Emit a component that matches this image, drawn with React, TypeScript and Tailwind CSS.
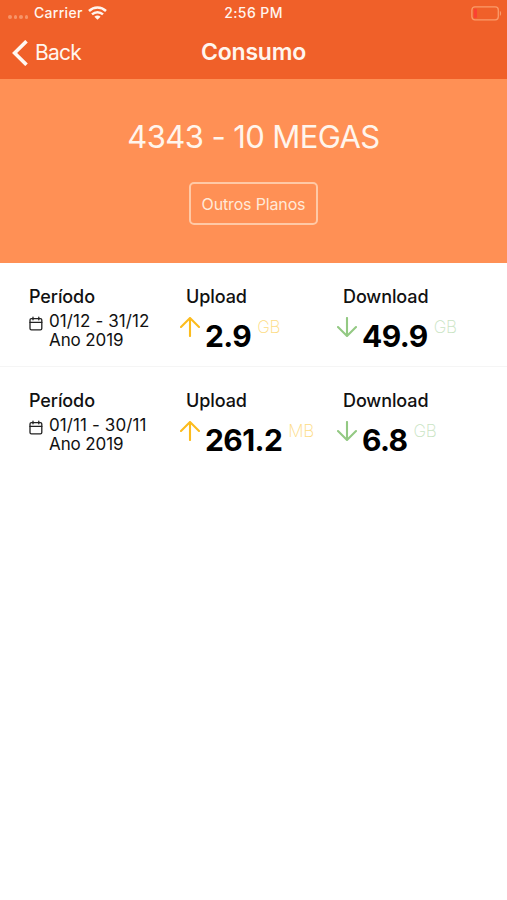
import React from 'react';

interface Usage {
  value: string;
  unit: string;
}

interface Period {
  range: string;
  year: string;
  upload: Usage;
  download: Usage;
}

const periods: Period[] = [
  { range: '01/12 - 31/12', year: 'Ano 2019', upload: { value: '2.9', unit: 'GB' }, download: { value: '49.9', unit: 'GB' } },
  { range: '01/11 - 30/11', year: 'Ano 2019', upload: { value: '261.2', unit: 'MB' }, download: { value: '6.8', unit: 'GB' } },
];

const WifiIcon = () => (
  <svg className="w-[19px] h-[14px]" viewBox="0 0 19 14" fill="none" stroke="#fff5ee" strokeWidth="2.5">
    <path d="M1 5C5.8 0.4 13.2 0.4 18 5" />
    <path d="M4 8.4C7.2 5.5 11.8 5.5 15 8.4" />
    <path d="M9.5 13.8L6.4 10.7C8.2 9.2 10.8 9.2 12.6 10.7Z" fill="#fff5ee" stroke="none" />
  </svg>
);

const BatteryIcon = () => (
  <svg className="w-[31px] h-[15px]" viewBox="0 0 31 15" fill="none">
    <rect x="0.9" y="0.9" width="26.4" height="12.9" rx="3" stroke="#fa9b6b" strokeWidth="1.3" />
    <rect x="2.8" y="2.8" width="3.2" height="9.2" rx="1" fill="#fb4133" />
    <path d="M28.9 5V9.8C30.5 9.2 30.5 5.6 28.9 5Z" fill="#fa9b6b" />
  </svg>
);

const CalendarIcon = () => (
  <svg className="w-[14px] h-[15px] shrink-0" viewBox="0 0 14 15" fill="none" stroke="#222" strokeWidth="1.3" strokeLinecap="round">
    <rect x="1" y="2.6" width="11.8" height="11.2" rx="1.4" />
    <path d="M1 6.4H12.8" />
    <path d="M4 1.2V3.8M9.8 1.2V3.8" />
  </svg>
);

const ArrowIcon = ({ down }: { down?: boolean }) => (
  <svg
    className={`w-5 h-5 shrink-0 ${down ? 'rotate-180' : ''}`}
    viewBox="0 0 20 20"
    fill="none"
    stroke={down ? '#93c983' : '#fcbc1e'}
    strokeWidth="2.1"
    strokeLinecap="round"
    strokeLinejoin="round"
  >
    <path d="M10 19V1M1 10L10 1L19 10" />
  </svg>
);

const UsageColumn = ({ title, usage, down }: { title: string; usage: Usage; down?: boolean }) => (
  <div className="w-[157px] shrink-0 whitespace-nowrap">
    <h3 className="pl-[6px] text-[18px] leading-[22px] font-medium tracking-[-0.1px]">{title}</h3>
    <div className="flex items-start mt-[9px]">
      <ArrowIcon down={down} />
      <span className="ml-[5px] mt-px text-[30px] leading-9 font-bold tracking-[-0.6px] text-black">{usage.value}</span>
      <span className={`ml-[6px] text-[17px] leading-5 font-extralight tracking-[-0.3px] ${down ? 'text-[#c9e4c3]' : 'text-[#fddc85]'}`}>
        {usage.unit}
      </span>
    </div>
  </div>
);

const App: React.FC = () => {
  return (
    <div className="w-[507px] h-[900px] bg-white text-[#111] font-['Inter',sans-serif] overflow-hidden">
      <header className="h-[79px] bg-[#f06029] text-[#fff5ee]">
        <div className="grid grid-cols-3 h-[26px] items-center text-[14px] leading-5 font-medium">
          <div className="flex items-center pl-2">
            <div className="flex gap-[2px] mt-2 mr-[5px]">
              {[0, 1, 2, 3].map((i) => (
                <span key={i} className="size-[3.5px] rounded-full bg-[#f79468]" />
              ))}
            </div>
            <span className="ml-px mr-[5px] -mt-px tracking-[0.3px]">Carrier</span>
            <WifiIcon />
          </div>
          <span className="text-center -mt-px tracking-[0.4px]">2:56 PM</span>
          <div className="flex justify-end pr-[5px]">
            <BatteryIcon />
          </div>
        </div>
        <nav className="grid grid-cols-3 h-[53px] items-center">
          <button className="flex items-center pl-3 text-[21px] tracking-[-0.8px]">
            <svg className="w-4 h-[26px] mr-[7px]" viewBox="0 0 16 26" fill="none" stroke="#fff8f2" strokeWidth="3.6">
              <path d="M14.5 1.2L2.6 13L14.5 24.8" />
            </svg>
            Back
          </button>
          <h1 className="text-center text-[23px] font-semibold tracking-[-0.2px]">Consumo</h1>
        </nav>
      </header>

      <section className="h-[184px] bg-[#ff9055] flex flex-col items-center pt-[38px] text-[#fff5ec]">
        <h2 className="text-[31px] leading-10 tracking-[-0.6px] whitespace-nowrap">4343 - 10 MEGAS</h2>
        <button className="mt-[25px] w-[129px] h-[43px] rounded-[5px] border-2 border-[#ffc9a6] text-[16px] tracking-[-0.15px] text-[#ffe9d8]">
          Outros Planos
        </button>
      </section>

      <main>
        {periods.map((p) => (
          <div key={p.range} className="flex h-[104px] pl-[29px] pt-[23px] border-b border-[#f5f5f5] last:border-b-0">
            <div className="w-[151px] shrink-0 whitespace-nowrap">
              <h3 className="text-[18px] leading-[22px] font-medium tracking-[-0.1px]">Período</h3>
              <div className="flex mt-1 text-[17px] leading-[18.5px]">
                <div className="mt-1 mr-[6px]">
                  <CalendarIcon />
                </div>
                <p>
                  <span className="tracking-[0.1px]">{p.range}</span>
                  <br />
                  <span className="tracking-[-0.1px]">{p.year}</span>
                </p>
              </div>
            </div>
            <UsageColumn title="Upload" usage={p.upload} />
            <UsageColumn title="Download" usage={p.download} down />
          </div>
        ))}
      </main>
    </div>
  );
};

export default App;
